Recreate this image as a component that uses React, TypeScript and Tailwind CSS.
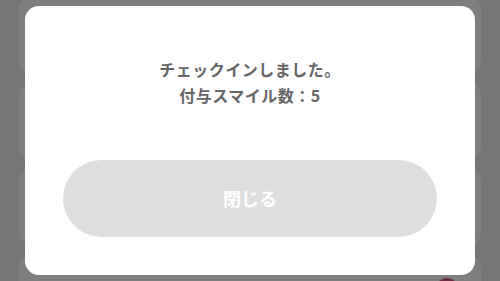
export default function App() {
  const cards = [0, 1, 2, 3];
  return (
    <div className="relative w-[500px] h-[281px] overflow-hidden bg-[#757575]" style={{ fontFamily: '"Noto Sans CJK JP", "Noto Sans", sans-serif' }}>
      <div className="flex flex-col gap-[10px] px-[19px] -mt-[3px]">
        {cards.map((c) => (
          <div key={c} className="relative h-[76px] rounded-[12px] bg-[#7e7e7e]">
            {c === 3 && (
              <div className="absolute right-[22px] top-[23px] w-[24px] h-[24px] rounded-full bg-[#6c2c41]" />
            )}
          </div>
        ))}
      </div>
      <div className="absolute left-[25px] top-[6px] w-[450px] h-[269px] rounded-[14px] bg-white flex flex-col items-center">
        <div className="mt-[50px] text-center text-[16px] leading-[26px] font-bold tracking-[0.5px] text-[#666666]">
          <p>チェックインしました。</p>
          <p>付与スマイル数：5</p>
        </div>
        <button className="mt-[52px] w-[374px] h-[77px] rounded-full bg-[#dedede] text-white text-[18px] font-bold flex items-center justify-center">
          閉じる
        </button>
      </div>
    </div>
  );
}
